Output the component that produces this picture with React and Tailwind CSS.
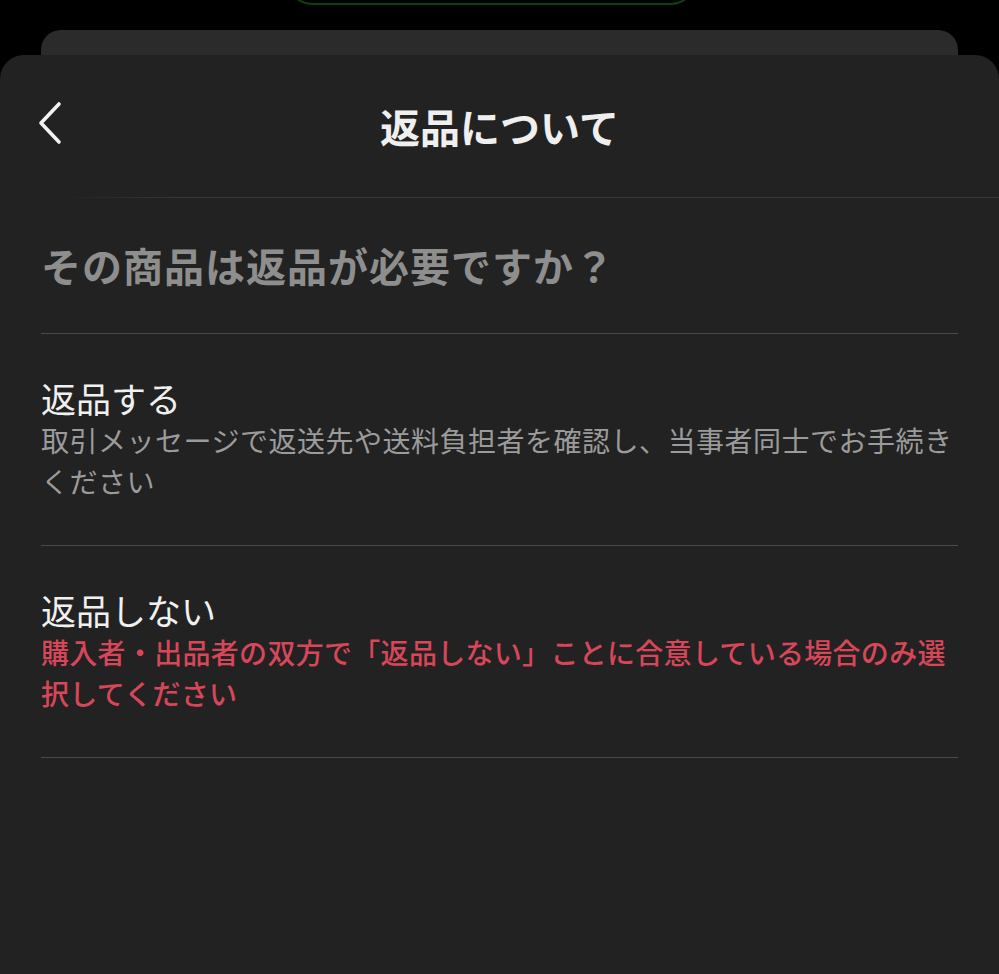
import React from 'react';

const font = { fontFamily: '"Noto Sans CJK JP", "Noto Sans", sans-serif' };

const BackChevron = () => (
  <svg width="26" height="44" viewBox="0 0 26 44" fill="none">
    <polyline
      points="22,3 4,22 22,41"
      stroke="#f2f2f2"
      strokeWidth="3.6"
      strokeLinecap="round"
      strokeLinejoin="round"
    />
  </svg>
);

const Option = ({ title, children }) => (
  <div className="pt-[42px] pb-[43px] border-b border-[#4a4a4a]">
    <div className="text-[35px] leading-[44px] text-[#f0f0f0]">{title}</div>
    {children}
  </div>
);

export default function App() {
  return (
    <div className="min-h-screen bg-black flex flex-col overflow-hidden" style={font}>
      {/* top edge of the screen behind */}
      <div className="relative h-[30px]">
        <div className="absolute left-[285px] top-[-60px] w-[413px] h-[65px] rounded-[28px] border-2 border-[#0c400c]" />
      </div>

      <div className="mx-[41px] h-[25px] rounded-t-[20px] bg-[#2b2b2b]" />

      <div className="flex-1 rounded-t-[24px] bg-[#222222] flex flex-col">
        <div className="relative h-[142px] flex items-center justify-center">
          <button className="absolute left-[37px] top-[68px] -translate-y-1/2">
            <BackChevron />
          </button>
          <h1 className="text-[40px] font-bold text-[#efefef] leading-none">返品について</h1>
        </div>
        <div className="ml-[60px] h-px bg-gradient-to-r from-transparent to-[#363636] to-[12%]" />

        <div className="px-[41px]">
          <div className="pt-[39px] pb-[40px] border-b border-[#4a4a4a]">
            <h2 className="text-[40px] tracking-[1px] leading-[56px] font-bold text-[#8e8e8e]">
              その商品は返品が必要ですか？
            </h2>
          </div>

          <Option title="返品する">
            <p className="text-[28px] tracking-[0.5px] leading-[41px] text-[#9b9b9b]">
              取引メッセージで返送先や送料負担者を確認し、当事者同士でお手続きください
            </p>
          </Option>

          <Option title="返品しない">
            <p className="text-[28px] tracking-[0.3px] leading-[41px] font-medium text-[#d84659]">
              購入者・出品者の双方で「返品しない」ことに合意している場合のみ選択してください
            </p>
          </Option>
        </div>
      </div>
    </div>
  );
}
